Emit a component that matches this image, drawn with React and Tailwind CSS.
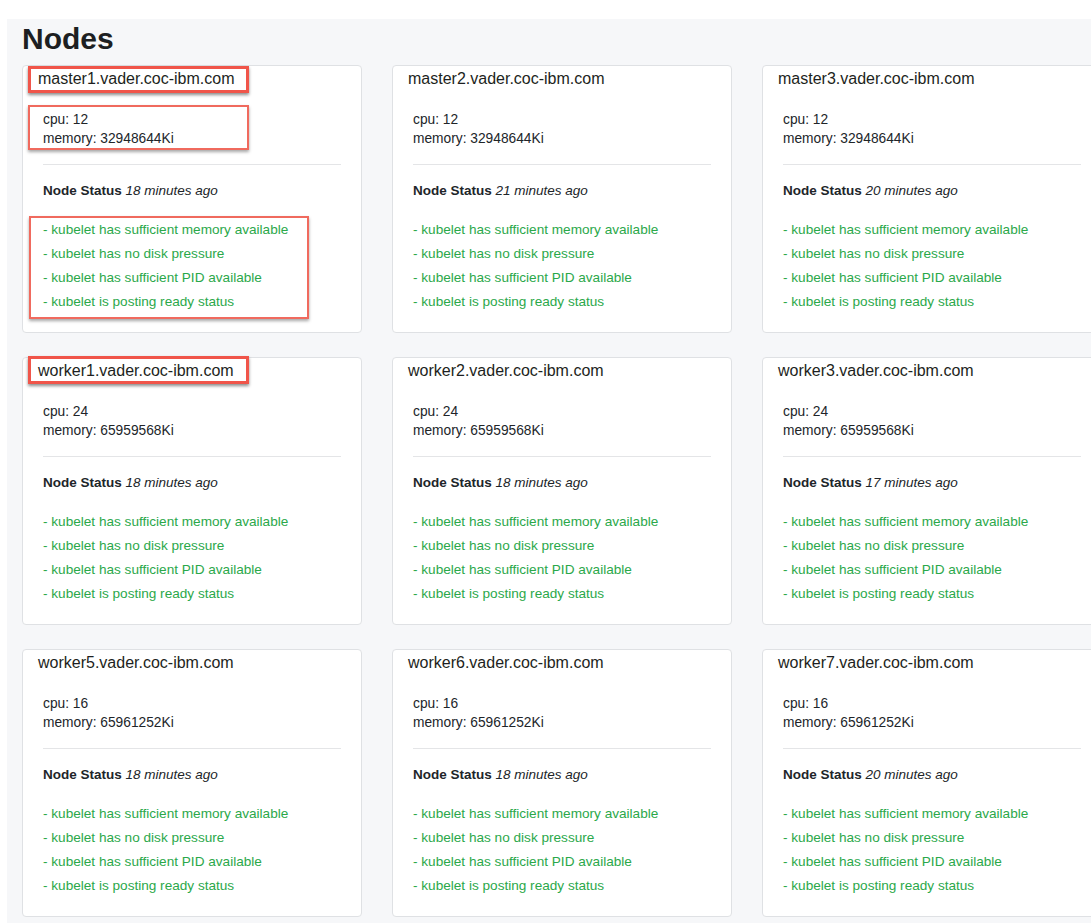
import React from "react";

const conditions = [
  "- kubelet has sufficient memory available",
  "- kubelet has no disk pressure",
  "- kubelet has sufficient PID available",
  "- kubelet is posting ready status",
];

const nodes = [
  { name: "master1.vader.coc-ibm.com", cpu: 12, memory: "32948644Ki", ago: "18 minutes ago", marks: "all" },
  { name: "master2.vader.coc-ibm.com", cpu: 12, memory: "32948644Ki", ago: "21 minutes ago" },
  { name: "master3.vader.coc-ibm.com", cpu: 12, memory: "32948644Ki", ago: "20 minutes ago" },
  { name: "worker1.vader.coc-ibm.com", cpu: 24, memory: "65959568Ki", ago: "18 minutes ago", marks: "title" },
  { name: "worker2.vader.coc-ibm.com", cpu: 24, memory: "65959568Ki", ago: "18 minutes ago" },
  { name: "worker3.vader.coc-ibm.com", cpu: 24, memory: "65959568Ki", ago: "17 minutes ago" },
  { name: "worker5.vader.coc-ibm.com", cpu: 16, memory: "65961252Ki", ago: "18 minutes ago" },
  { name: "worker6.vader.coc-ibm.com", cpu: 16, memory: "65961252Ki", ago: "18 minutes ago" },
  { name: "worker7.vader.coc-ibm.com", cpu: 16, memory: "65961252Ki", ago: "20 minutes ago" },
];

function NodeCard({ node }) {
  return (
    <div className="relative h-[268px] w-[340px] rounded-[4px] border border-[#dfe1e4] bg-white pt-[1px]">
      <div className="h-[24px] pl-[15px] text-[16px] leading-[24px] text-[#1d1f21]">{node.name}</div>
      <div className="px-[20px]">
        <div className="mt-[19px] text-[13.75px] leading-[19px] text-[#212529]">
          <div>cpu: {node.cpu}</div>
          <div>memory: {node.memory}</div>
        </div>
        <div className="mt-[16px] border-t border-[#e4e5e7]" />
        <div className="mt-[16px] text-[13.5px] leading-[19px] text-[#212529]">
          <span className="font-bold">Node Status</span> <span className="italic">{node.ago}</span>
        </div>
        <div className="mt-[18px] text-[13.6px] leading-[24px] text-[#2ba84a]">
          {conditions.map((c) => (
            <div key={c}>{c}</div>
          ))}
        </div>
      </div>

      {/* red highlight boxes from the screenshot */}
      {node.marks === "all" && (
        <>
          <div className="absolute left-[5px] top-[0px] h-[27px] w-[221px] border-[3px] border-[#f0554a] shadow-[0_2px_3px_rgba(0,0,0,0.45)]" />
          <div className="absolute left-[5px] top-[39px] h-[45px] w-[221px] border-2 border-[#f06a5e] shadow-[0_2px_3px_rgba(0,0,0,0.35)]" />
          <div className="absolute left-[6px] top-[150px] h-[103px] w-[280px] border-2 border-[#f06a5e] shadow-[0_2px_3px_rgba(0,0,0,0.35)]" />
        </>
      )}
      {node.marks === "title" && (
        <div className="absolute left-[5px] top-[-2px] h-[28px] w-[221px] border-[3px] border-[#f0554a] shadow-[0_2px_3px_rgba(0,0,0,0.45)]" />
      )}
    </div>
  );
}

export default function App() {
  return (
    <div
      className="min-h-screen w-full overflow-hidden bg-white pl-[7px] pt-[19px]"
      style={{ fontFamily: '"Liberation Sans", Arial, sans-serif' }}
    >
      <div className="h-[904px] overflow-hidden bg-[#f6f7f9] pl-[15px] pt-[2px]">
        <h1 className="text-[30px] font-bold leading-[36px] text-[#1d1f22]">Nodes</h1>
        <div className="mt-[8px] grid w-[1080px] grid-cols-[340px_340px_340px] gap-x-[30px] gap-y-[24px]">
          {nodes.map((n) => (
            <NodeCard key={n.name} node={n} />
          ))}
        </div>
      </div>
    </div>
  );
}
